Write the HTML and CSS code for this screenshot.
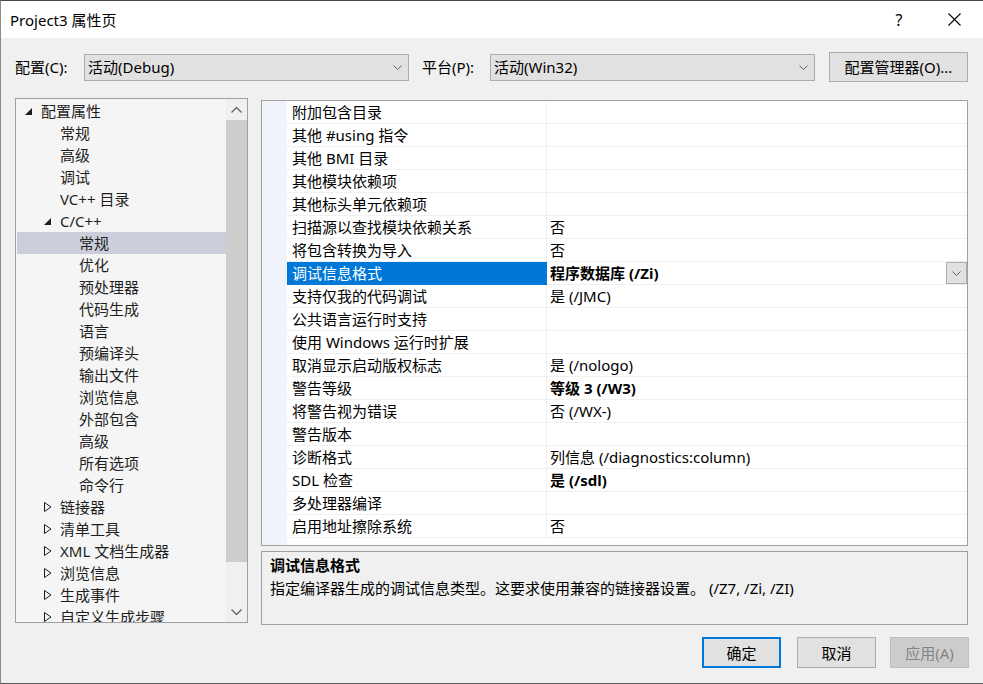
FILE: index.html
```html
<html>
<head>
<title>Project3 属性页</title>
<link rel="stylesheet" href="styles.css">
</head>
<body>
<div class="window">
  <div class="titlebar">
    <span class="title">Project3 属性页</span>
    <span class="cap help">?</span>
    <span class="cap close"><svg width="13" height="13" viewBox="0 0 13 13"><path d="M0.5 0.5 L12.5 12.5 M12.5 0.5 L0.5 12.5" stroke="#000" stroke-width="1.1" fill="none"/></svg></span>
  </div>
  <div class="dlg">
    <div class="config-row">
      <span class="lbl lbl-config">配置(C):</span>
      <div class="combo"><span>活动(Debug)</span><svg class="chev" width="9" height="5" viewBox="0 0 9 5"><path d="M0.5 0.5 L4.5 4.5 L8.5 0.5" stroke="#606060" fill="none"/></svg></div>
      <span class="lbl lbl-platform">平台(P):</span>
      <div class="combo"><span>活动(Win32)</span><svg class="chev" width="9" height="5" viewBox="0 0 9 5"><path d="M0.5 0.5 L4.5 4.5 L8.5 0.5" stroke="#606060" fill="none"/></svg></div>
      <div class="btn btn-manager">配置管理器(O)...</div>
    </div>

    <div class="main">
      <div class="tree">
        <div class="tree-list">
          <div class="node lv0"><span class="tog"><svg width="7" height="7" viewBox="0 0 7 7"><polygon points="7,0 7,7 0,7" fill="#1e1e1e"/></svg></span>配置属性</div>
          <div class="node lv1"><span class="tog"></span>常规</div>
          <div class="node lv1"><span class="tog"></span>高级</div>
          <div class="node lv1"><span class="tog"></span>调试</div>
          <div class="node lv1"><span class="tog"></span>VC++ 目录</div>
          <div class="node lv1"><span class="tog"><svg width="7" height="7" viewBox="0 0 7 7"><polygon points="7,0 7,7 0,7" fill="#1e1e1e"/></svg></span>C/C++</div>
          <div class="node lv2 sel"><span class="tog"></span>常规</div>
          <div class="node lv2"><span class="tog"></span>优化</div>
          <div class="node lv2"><span class="tog"></span>预处理器</div>
          <div class="node lv2"><span class="tog"></span>代码生成</div>
          <div class="node lv2"><span class="tog"></span>语言</div>
          <div class="node lv2"><span class="tog"></span>预编译头</div>
          <div class="node lv2"><span class="tog"></span>输出文件</div>
          <div class="node lv2"><span class="tog"></span>浏览信息</div>
          <div class="node lv2"><span class="tog"></span>外部包含</div>
          <div class="node lv2"><span class="tog"></span>高级</div>
          <div class="node lv2"><span class="tog"></span>所有选项</div>
          <div class="node lv2"><span class="tog"></span>命令行</div>
          <div class="node lv1"><span class="tog"><svg width="8" height="10" viewBox="0 0 8 10"><polygon points="0.5,0.5 7,5 0.5,9.5" stroke="#1e1e1e" fill="none"/></svg></span>链接器</div>
          <div class="node lv1"><span class="tog"><svg width="8" height="10" viewBox="0 0 8 10"><polygon points="0.5,0.5 7,5 0.5,9.5" stroke="#1e1e1e" fill="none"/></svg></span>清单工具</div>
          <div class="node lv1"><span class="tog"><svg width="8" height="10" viewBox="0 0 8 10"><polygon points="0.5,0.5 7,5 0.5,9.5" stroke="#1e1e1e" fill="none"/></svg></span>XML 文档生成器</div>
          <div class="node lv1"><span class="tog"><svg width="8" height="10" viewBox="0 0 8 10"><polygon points="0.5,0.5 7,5 0.5,9.5" stroke="#1e1e1e" fill="none"/></svg></span>浏览信息</div>
          <div class="node lv1"><span class="tog"><svg width="8" height="10" viewBox="0 0 8 10"><polygon points="0.5,0.5 7,5 0.5,9.5" stroke="#1e1e1e" fill="none"/></svg></span>生成事件</div>
          <div class="node lv1"><span class="tog"><svg width="8" height="10" viewBox="0 0 8 10"><polygon points="0.5,0.5 7,5 0.5,9.5" stroke="#1e1e1e" fill="none"/></svg></span>自定义生成步骤</div>
        </div>
        <div class="scrollbar">
          <div class="sb-arrow"><svg width="11" height="6" viewBox="0 0 11 6"><path d="M0.5 5.5 L5.5 0.5 L10.5 5.5" stroke="#606060" stroke-width="1.3" fill="none"/></svg></div>
          <div class="sb-thumb"></div>
          <div class="sb-track"></div>
          <div class="sb-arrow"><svg width="11" height="6" viewBox="0 0 11 6"><path d="M0.5 0.5 L5.5 5.5 L10.5 0.5" stroke="#606060" stroke-width="1.3" fill="none"/></svg></div>
        </div>
      </div>

      <div class="right">
        <div class="grid">
          <div class="prow"><span class="pm"></span><span class="pn">附加包含目录</span><span class="pv"></span></div>
          <div class="prow"><span class="pm"></span><span class="pn">其他 #using 指令</span><span class="pv"></span></div>
          <div class="prow"><span class="pm"></span><span class="pn">其他 BMI 目录</span><span class="pv"></span></div>
          <div class="prow"><span class="pm"></span><span class="pn">其他模块依赖项</span><span class="pv"></span></div>
          <div class="prow"><span class="pm"></span><span class="pn">其他标头单元依赖项</span><span class="pv"></span></div>
          <div class="prow"><span class="pm"></span><span class="pn">扫描源以查找模块依赖关系</span><span class="pv">否</span></div>
          <div class="prow"><span class="pm"></span><span class="pn">将包含转换为导入</span><span class="pv">否</span></div>
          <div class="prow cur"><span class="pm"></span><span class="pn">调试信息格式</span><span class="pv bold">程序数据库 (/Zi)<span class="drop"><svg width="9" height="5" viewBox="0 0 9 5"><path d="M0.5 0.5 L4.5 4.5 L8.5 0.5" stroke="#606060" fill="none"/></svg></span></span></div>
          <div class="prow"><span class="pm"></span><span class="pn">支持仅我的代码调试</span><span class="pv">是 (/JMC)</span></div>
          <div class="prow"><span class="pm"></span><span class="pn">公共语言运行时支持</span><span class="pv"></span></div>
          <div class="prow"><span class="pm"></span><span class="pn">使用 Windows 运行时扩展</span><span class="pv"></span></div>
          <div class="prow"><span class="pm"></span><span class="pn">取消显示启动版权标志</span><span class="pv">是 (/nologo)</span></div>
          <div class="prow"><span class="pm"></span><span class="pn">警告等级</span><span class="pv bold">等级 3 (/W3)</span></div>
          <div class="prow"><span class="pm"></span><span class="pn">将警告视为错误</span><span class="pv">否 (/WX-)</span></div>
          <div class="prow"><span class="pm"></span><span class="pn">警告版本</span><span class="pv"></span></div>
          <div class="prow"><span class="pm"></span><span class="pn">诊断格式</span><span class="pv">列信息 (/diagnostics:column)</span></div>
          <div class="prow"><span class="pm"></span><span class="pn">SDL 检查</span><span class="pv bold">是 (/sdl)</span></div>
          <div class="prow"><span class="pm"></span><span class="pn">多处理器编译</span><span class="pv"></span></div>
          <div class="prow"><span class="pm"></span><span class="pn">启用地址擦除系统</span><span class="pv">否</span></div>
          <div class="grid-rest"><span class="pm"></span></div>
        </div>
        <div class="desc">
          <div class="desc-title">调试信息格式</div>
          <div class="desc-text">指定编译器生成的调试信息类型。这要求使用兼容的链接器设置。 (/Z7, /Zi, /ZI)</div>
        </div>
      </div>
    </div>

    <div class="buttons">
      <div class="btn btn-default">确定</div>
      <div class="btn btn-cancel">取消</div>
      <div class="btn btn-disabled">应用(A)</div>
    </div>
  </div>
</div>
</body>
</html>
```

FILE: styles.css
```css
body { margin:0; background:#f0f0f0; font-family:"Noto Sans", "Noto Sans CJK SC", sans-serif; font-size:15px; color:#000; }
.window { width:983px; height:684px; box-sizing:border-box; border-top:1px solid #4a4a4a; border-left:1px solid #8c8c8c; border-bottom:1px solid #5a5a5a; display:flex; flex-direction:column; background:#f0f0f0; }

/* title bar */
.titlebar { height:37px; background:#fff; display:flex; align-items:center; padding-left:9px; }
.title { line-height:20px; }
.cap { width:46px; height:37px; display:flex; align-items:center; justify-content:center; }
.help { margin-left:auto; font-size:16px; }
.close { margin-left:9px; margin-right:6px; }

.dlg { flex:1; padding:0 14px; display:flex; flex-direction:column; }

/* config row */
.config-row { margin-top:14px; height:30px; display:flex; align-items:center; }
.lbl { line-height:20px; }
.lbl-config { width:69px; }
.lbl-platform { width:68px; margin-left:13px; }
.combo { width:325px; height:27px; box-sizing:border-box; background:#e1e1e1; border:1px solid #adadad; display:flex; align-items:center; padding:0 6px 0 3px; }
.combo span { flex:1; line-height:20px; }
.btn { box-sizing:border-box; display:flex; align-items:center; justify-content:center; background:#e1e1e1; border:1px solid #adadad; line-height:20px; }
.btn-manager { width:139px; height:30px; margin-left:14px; }

/* main area */
.main { margin-top:16px; display:flex; height:527px; }
.tree { width:233px; height:525px; box-sizing:border-box; border:1px solid #a0a0a0; background:#f5f5f5; display:flex; overflow:hidden; }
.tree-list { flex:1; padding-top:1px; overflow:hidden; color:#1e1e1e; }
.node { height:22px; line-height:22px; display:flex; align-items:center; white-space:nowrap; margin-left:1px; }
.node.lv0 { padding-left:5px; }
.node.lv1 { padding-left:24px; }
.node.lv2 { padding-left:43px; }
.node.sel { background:#cccedb; }
.tog { width:19px; height:22px; display:flex; align-items:center; padding-left:3px; box-sizing:border-box; }
.scrollbar { width:21px; background:#f0f0f0; display:flex; flex-direction:column; }
.sb-arrow { height:21px; display:flex; align-items:center; justify-content:center; }
.sb-thumb { height:442px; background:#cdcdcd; }
.sb-track { flex:1; }

.right { margin-left:13px; width:707px; display:flex; flex-direction:column; }
.grid { margin-top:2px; height:446px; box-sizing:border-box; border:1px solid #a0a0a0; background:#fff; display:flex; flex-direction:column; }
.prow { height:23px; display:flex; }
.pm { width:25px; background:#f0f4fa; flex:none; }
.pn { width:260px; box-sizing:border-box; padding-left:5px; line-height:22px; border-bottom:1px solid #f0f0f0; border-right:1px solid #f0f0f0; white-space:nowrap; }
.pv { flex:1; padding-left:3px; line-height:22px; border-bottom:1px solid #f0f0f0; display:flex; white-space:nowrap; }
.bold { font-weight:bold; }
.cur .pn { background:#0078d7; color:#fff; border-color:#0078d7; }
.drop { margin-left:auto; width:21px; height:22px; box-sizing:border-box; background:#e1e1e1; border:1px solid #adadad; display:flex; align-items:center; justify-content:center; }
.grid-rest { flex:1; display:flex; }

.desc { margin-top:5px; height:74px; box-sizing:border-box; border:1px solid #a0a0a0; background:#f0f0f0; padding:2px 8px 0; }
.desc-title { font-weight:bold; line-height:23px; }
.desc-text { line-height:23px; }

/* bottom buttons */
.buttons { margin-top:12px; display:flex; justify-content:flex-end; }
.buttons .btn { width:79px; height:31px; }
.btn-default { border:2px solid #0078d7; }
.btn-cancel { margin-left:16px; }
.btn-disabled { margin-left:14px; background:#cccccc; border-color:#bfbfbf; color:#838383; }
```
